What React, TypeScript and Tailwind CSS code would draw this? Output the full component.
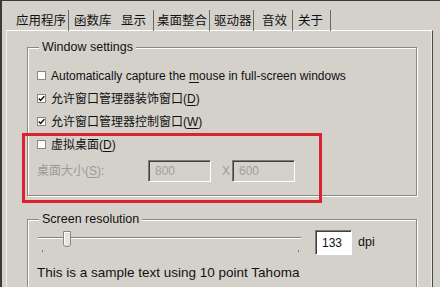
import React from 'react';

const tabs = [
  { label: '应用程序', cls: 'w-[67px] pl-[14px] border-r' },
  { label: '函数库', cls: 'w-[43px] pl-[5px]' },
  { label: '显示', cls: 'w-[42px] pl-[9px] border-r' },
  { label: '桌面整合', cls: 'w-[56px] pl-[3px] border-r' },
  { label: '驱动器', cls: 'w-[44px] pl-[4px] border-r' },
  { label: '音效', cls: 'w-[39px] pl-[8px] border-r' },
  { label: '关于', cls: 'w-[38px] pl-[5px] border-r' },
];

function Check({ checked }: { checked?: boolean }) {
  return (
    <span className="w-[9px] h-[9px] border border-[#8a8781] bg-white flex items-center justify-center shrink-0">
      {checked && (
        <svg width="7" height="7" viewBox="0 0 7 7">
          <path d="M0.8 3.4 L2.6 5.4 L6.3 1.2" stroke="#111" strokeWidth="1.5" fill="none" />
        </svg>
      )}
    </span>
  );
}

function SunkenBox({ value, disabled, w }: { value: string; disabled?: boolean; w: string }) {
  return (
    <div
      className={`${w} h-full flex items-center pl-[6px] border border-t-[#7d7a74] border-l-[#7d7a74] border-b-white border-r-white shadow-[inset_1px_1px_0_#404040] ${
        disabled ? 'bg-[#d4d1cb] text-[#a19e98]' : 'bg-white text-[#111]'
      }`}
    >
      {value}
    </div>
  );
}

export default function App() {
  return (
    <div className="relative w-[440px] h-[287px] overflow-hidden bg-[#d4d1cb] border-t border-l-2 border-[#3a3a3a] text-[#111] text-[12px] font-['Liberation_Sans','Noto_Sans_CJK_SC',sans-serif]">
      {/* tab strip */}
      <div className="flex h-[29px] pt-[9px] text-[12.5px]">
        {tabs.map((t) => (
          <div key={t.label} className={`${t.cls} h-[21px] flex items-center pt-[2px] border-[#6a6762] whitespace-nowrap`}>
            {t.label}
          </div>
        ))}
      </div>

      {/* tab page */}
      <div className="ml-[4px] w-[427px] h-[260px] border-t border-l border-t-white border-l-[#f2f0ec] border-r border-r-[#4a4844] shadow-[inset_-1px_0_0_#eeece8]">
        <fieldset className="ml-[20px] mt-[8px] w-[390px] pl-[9px] pb-[13px] border border-[#8b8882] shadow-[inset_1px_1px_0_#fff,1px_1px_0_#fff]">
          <legend className="ml-[2px] px-[3px] bg-[#d4d1cb] leading-[16px] text-[12.5px]">Window settings</legend>
          <div className="pt-[9px] flex flex-col">
            <div className="h-[23px] flex items-center gap-[5px]">
              <Check />
              <span>
                Automatically capture the <span className="underline underline-offset-2">m</span>ouse in full-screen windows
              </span>
            </div>
            <div className="h-[23px] flex items-center gap-[5px]">
              <Check checked />
              <span>
                允许窗口管理器装饰窗口(<span className="underline underline-offset-2">D</span>)
              </span>
            </div>
            <div className="h-[23px] flex items-center gap-[5px]">
              <Check checked />
              <span>
                允许窗口管理器控制窗口(<span className="underline underline-offset-2">W</span>)
              </span>
            </div>
            <div className="h-[23px] flex items-center gap-[5px]">
              <Check />
              <span>
                虚拟桌面(<span className="underline underline-offset-2">D</span>)
              </span>
            </div>
            <div className="mt-[4px] h-[22px] flex items-center">
              <span className="w-[111px] text-[#9c9993]">
                桌面大小(<span className="underline underline-offset-2">S</span>):
              </span>
              <SunkenBox value="800" disabled w="w-[63px]" />
              <span className="w-[21px] pl-[11px] text-[#9c9993]">X</span>
              <SunkenBox value="600" disabled w="w-[63px]" />
            </div>
          </div>
        </fieldset>

        <fieldset className="ml-[20px] mt-[15px] w-[390px] h-[90px] pl-[9px] border border-[#8b8882] shadow-[inset_1px_1px_0_#fff,1px_1px_0_#fff]">
          <legend className="ml-[2px] px-[3px] bg-[#d4d1cb] leading-[16px] text-[12.5px]">Screen resolution</legend>
          <div className="mt-[3px] h-[25px] flex items-center">
            <div className="relative w-[264px] h-full">
              <div className="absolute left-[1px] right-0 top-[7px] h-[2px] border-t border-[#85827c] bg-white" />
              <div className="absolute left-[26px] top-[1px] w-[8px] h-[16px] bg-[#e6e4df] border border-[#8b8882] rounded-b-[3px] shadow-[inset_1px_1px_0_#fff]" />
              <div className="absolute left-[5px] top-[20px] w-[1px] h-[2px] bg-[#7a7772]" />
              <div className="absolute left-[261px] top-[20px] w-[1px] h-[2px] bg-[#7a7772]" />
            </div>
            <div className="ml-[14px] h-full">
              <SunkenBox value="133" w="w-[37px]" />
            </div>
            <span className="ml-[6px] text-[12.5px]">dpi</span>
          </div>
          <div className="mt-[9px] leading-[18px] text-[13.5px]">This is a sample text using 10 point Tahoma</div>
        </fieldset>
      </div>

      {/* red annotation frame */}
      <div className="absolute left-[20px] top-[132px] w-[300px] h-[70px] border-[3px] border-[#db2230]" />
    </div>
  );
}
